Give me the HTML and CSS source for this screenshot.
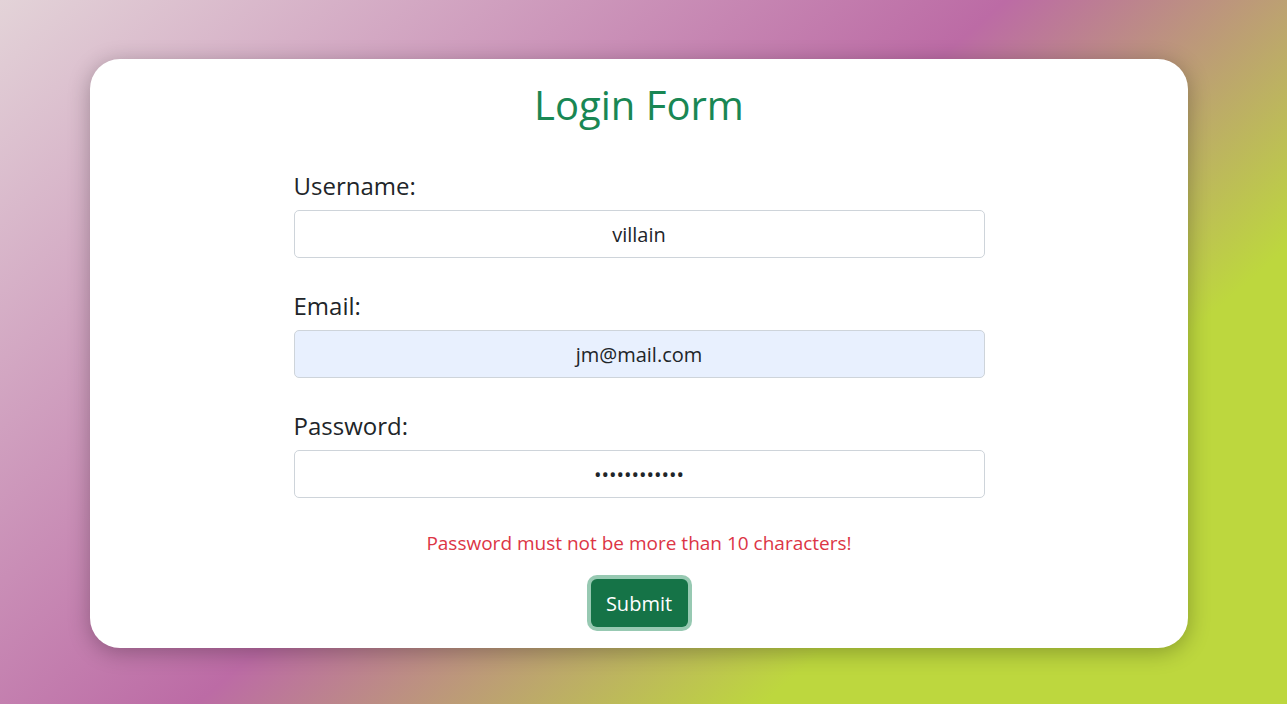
FILE: index.html
```html
<!DOCTYPE html>
<html lang="en">
<head>
<meta charset="utf-8">
<title>Login Form</title>
<link rel="stylesheet" href="styles.css">
</head>
<body>
  <main class="card">
    <h1 class="title">Login Form</h1>
    <form class="form">
      <div class="group">
        <label class="label" for="u">Username:</label>
        <input class="input" id="u" type="text" value="villain">
      </div>
      <div class="group">
        <label class="label" for="e">Email:</label>
        <input class="input input-autofill" id="e" type="email" value="jm@mail.com">
      </div>
      <div class="group">
        <label class="label" for="p">Password:</label>
        <input class="input" id="p" type="password" value="123456789012">
      </div>
      <p class="error">Password must not be more than 10 characters!</p>
      <div class="actions">
        <button class="btn" type="button">Submit</button>
      </div>
    </form>
  </main>
</body>
</html>
```
FILE: styles.css
```css
html, body {
  margin: 0;
  height: 100%;
}
body {
  background: linear-gradient(139deg, #e3d3d8 0%, #bc6ba5 48%, #bdd73e 75%, #bdd73e 100%);
  font-family: "Open Sans", "Noto Sans", sans-serif;
  color: #212529;
  padding-top: 59px;
  box-sizing: border-box;
  overflow: hidden;
}
.card {
  margin-left: 90px;
  width: 1098px;
  height: 589px;
  box-sizing: border-box;
  background: #fff;
  border-radius: 30px;
  box-shadow: 0 4px 22px rgba(0, 0, 0, 0.28);
  padding-top: 18px;
}
.title {
  margin: 0;
  text-align: center;
  color: #198754;
  font-size: 40px;
  font-weight: 400;
  line-height: 56px;
}
.form {
  width: 691px;
  margin: 38px auto 0;
  display: flex;
  flex-direction: column;
}
.group {
  display: flex;
  flex-direction: column;
  margin-bottom: 33px;
}
.label {
  font-size: 24px;
  line-height: 30px;
  margin-bottom: 9px;
}
.input {
  height: 48px;
  box-sizing: border-box;
  border: 1px solid #ced4da;
  border-radius: 5px;
  background: #fff;
  text-align: center;
  font-family: inherit;
  font-size: 20px;
  color: #212529;
  padding: 0 12px;
  outline: none;
}
.input-autofill {
  background: #e8f0fe;
}
.error {
  margin: 0;
  text-align: center;
  color: #dc3545;
  font-size: 19px;
  line-height: 24px;
}
.actions {
  display: flex;
  justify-content: center;
  margin-top: 24px;
}
.btn {
  width: 97px;
  height: 48px;
  background: #157347;
  color: #fff;
  border: none;
  border-radius: 6px;
  font-family: inherit;
  font-size: 20px;
  box-shadow: 0 0 0 4px rgba(25, 135, 84, 0.45);
  cursor: pointer;
}
```
